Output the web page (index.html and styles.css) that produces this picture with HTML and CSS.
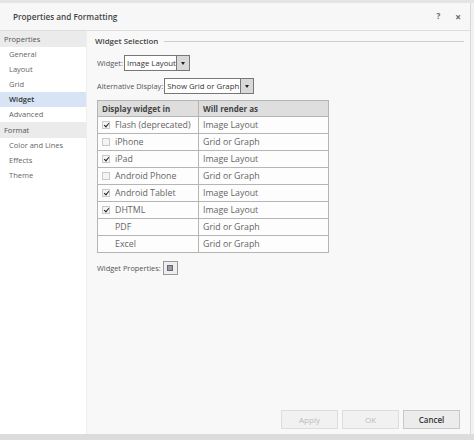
FILE: index.html
```html
<!DOCTYPE html>
<html>
<head>
<meta charset="utf-8">
<link rel="stylesheet" href="styles.css">
</head>
<body>
<div class="topstrip"></div>
<div class="dialog">
  <div class="titlebar">
    <span class="title">Properties and Formatting</span>
    <span class="tools"><span class="help">?</span><span class="close">×</span></span>
  </div>
  <div class="body">
    <div class="sidebar">
      <div class="group">Properties</div>
      <div class="item">General</div>
      <div class="item">Layout</div>
      <div class="item">Grid</div>
      <div class="item active">Widget</div>
      <div class="item">Advanced</div>
      <div class="group">Format</div>
      <div class="item">Color and Lines</div>
      <div class="item">Effects</div>
      <div class="item">Theme</div>
    </div>
    <div class="main">
      <div class="section-title"><span>Widget Selection</span><div class="rule"></div></div>
      <div class="field f1">
        <span class="label">Widget:</span>
        <span class="select s1"><span class="val">Image Layout</span><span class="arrow"><i></i></span></span>
      </div>
      <div class="field f2">
        <span class="label">Alternative Display:</span>
        <span class="select s2"><span class="val">Show Grid or Graph</span><span class="arrow"><i></i></span></span>
      </div>
      <table class="grid">
        <tr class="head"><th class="c1">Display widget in</th><th>Will render as</th></tr>
        <tr><td class="c1"><span class="cb on"></span>Flash (deprecated)</td><td>Image Layout</td></tr>
        <tr><td class="c1"><span class="cb"></span>iPhone</td><td>Grid or Graph</td></tr>
        <tr><td class="c1"><span class="cb on"></span>iPad</td><td>Image Layout</td></tr>
        <tr><td class="c1"><span class="cb"></span>Android Phone</td><td>Grid or Graph</td></tr>
        <tr><td class="c1"><span class="cb on"></span>Android Tablet</td><td>Image Layout</td></tr>
        <tr><td class="c1"><span class="cb on"></span>DHTML</td><td>Image Layout</td></tr>
        <tr><td class="c1"><span class="cb none"></span>PDF</td><td>Grid or Graph</td></tr>
        <tr><td class="c1"><span class="cb none"></span>Excel</td><td>Grid or Graph</td></tr>
      </table>
      <div class="field f3">
        <span class="label">Widget Properties:</span>
        <span class="propbtn"><i></i></span>
      </div>
      <div class="spacer"></div>
      <div class="buttons">
        <span class="btn disabled">Apply</span>
        <span class="btn disabled">OK</span>
        <span class="btn primary">Cancel</span>
      </div>
    </div>
  </div>
</div>
<div class="bottomstrip"></div>
</body>
</html>
```
FILE: styles.css
```css
html, body {
  margin: 0;
  padding: 0;
  background: #f2f2f2;
}
body {
  width: 474px;
  height: 440px;
  overflow: hidden;
  font-family: "Open Sans", "Noto Sans", sans-serif;
  font-size: 8px;
  color: #555;
  display: flex;
  flex-direction: column;
}
.topstrip {
  height: 3px;
  background: #e4e4e4;
}
.dialog {
  flex: 1;
  margin-right: 3px;
  border-right: 1px solid #d8d8d8;
  background: #f8f8f8;
  display: flex;
  flex-direction: column;
}
.titlebar {
  height: 27px;
  border-bottom: 1px solid #dedede;
  display: flex;
  align-items: center;
  justify-content: space-between;
  padding: 0 9px 0 13px;
  background: #f7f7f7;
}
.title {
  font-weight: 600;
  font-size: 8.2px;
  color: #444;
}
.tools {
  display: flex;
  gap: 15px;
  color: #666;
  font-weight: bold;
  font-size: 8px;
}
.close { font-size: 10px; }
.body {
  flex: 1;
  display: flex;
}
.sidebar {
  width: 86px;
  background: #fff;
  border-right: 1px solid #eee;
  font-size: 7.5px;
}
.group {
  height: 16px;
  line-height: 16px;
  padding-left: 4px;
  background: #ebebeb;
  color: #555;
}
.item {
  height: 15px;
  line-height: 15px;
  padding-left: 9px;
  color: #666;
}
.item.active {
  background: #d6e4f6;
  color: #333;
  font-weight: 600;
}
.main {
  flex: 1;
  padding: 2px 2px 0 8px;
  display: flex;
  flex-direction: column;
}
.section-title {
  display: flex;
  align-items: center;
  gap: 6px;
  font-weight: 600;
  font-size: 7.9px;
  color: #444;
  height: 16px;
}
.rule {
  flex: 1;
  height: 1px;
  background: #cfcfcf;
  margin-right: 4px;
}
.field {
  display: flex;
  align-items: center;
  padding-left: 2px;
  font-size: 7.4px;
  white-space: nowrap;
}
.f1 { margin-top: 6px; }
.f2 { margin-top: 7px; }
.label { margin-right: 1px; color: #555; }
.select {
  display: flex;
  flex-shrink: 0;
  height: 16px;
  border: 1px solid #777;
  background: #fff;
  box-sizing: border-box;
  font-size: 7.8px;
}
.s1 { width: 66px; }
.s2 { width: 90px; }
.val {
  flex: 1;
  line-height: 14px;
  padding-left: 2px;
  color: #333;
  white-space: nowrap;
  overflow: hidden;
}
.arrow {
  width: 12px;
  flex-shrink: 0;
  border-left: 1px solid #777;
  background: #d9d9d9;
  display: flex;
  align-items: center;
  justify-content: center;
}
.arrow i {
  width: 0;
  height: 0;
  border-left: 2px solid transparent;
  border-right: 2px solid transparent;
  border-top: 3px solid #222;
}
.grid {
  margin-top: 6px;
  margin-left: 2px;
  width: 232px;
  border-collapse: collapse;
  border: 1px solid #aaa;
  font-size: 8.8px;
}
.grid th, .grid td {
  height: 17px;
  padding: 0 0 0 4px;
  text-align: left;
  border: 1px solid #b5b5b5;
  box-sizing: border-box;
  white-space: nowrap;
}
.grid th {
  background: #dedede;
  font-weight: bold;
  color: #444;
  height: 16px;
  font-size: 8px;
}
.grid td {
  background: #fdfdfd;
  color: #666;
}
.grid .c1 { width: 101px; }
.cb {
  display: inline-block;
  width: 8px;
  height: 8px;
  border: 1px solid #c9c9c9;
  background: #f4f4f4;
  vertical-align: -1px;
  margin-right: 5px;
  position: relative;
  box-sizing: border-box;
}
.cb.on::after {
  content: "";
  position: absolute;
  left: 2px;
  top: 0px;
  width: 2px;
  height: 4px;
  border: solid #222;
  border-width: 0 1.5px 1.5px 0;
  transform: rotate(40deg);
}
.cb.none { visibility: hidden; }
.f3 { margin-top: 8px; }
.propbtn {
  width: 15px;
  height: 14px;
  box-sizing: border-box;
  border: 1px solid #999;
  background: #eee;
  display: flex;
  align-items: center;
  justify-content: center;
  margin-left: 1px;
}
.propbtn i {
  width: 4px;
  height: 4px;
  border: 1px solid #667;
  background: #99a;
}
.spacer { flex: 1; }
.buttons {
  display: flex;
  justify-content: flex-end;
  gap: 4px;
  padding-right: 8px;
  margin-bottom: 5px;
  font-size: 8px;
}
.btn {
  width: 57px;
  height: 19px;
  line-height: 17px;
  box-sizing: border-box;
  border: 1px solid #ddd;
  text-align: center;
  background: #f1f1f1;
}
.btn.disabled { color: #bbb; }
.btn.primary {
  border-color: #c8c8c8;
  background: #ececec;
  color: #333;
  font-weight: 600;
}
.bottomstrip {
  height: 6px;
  background: #dcdcdc;
}
```
